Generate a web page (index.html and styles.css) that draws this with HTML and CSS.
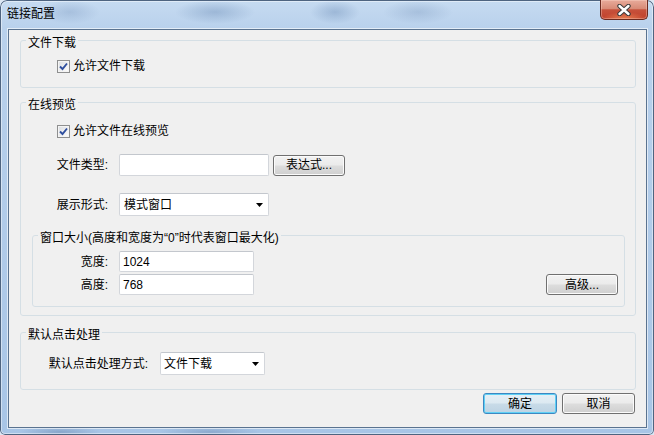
FILE: index.html
```html
<html>

<head>
    <link rel="stylesheet" href="styles.css">
</head>

<body>
    <div class="window">
        <div class="titlebar">
            <span class="title">链接配置</span>
            <button class="close">
                <svg width="14" height="12" viewBox="0 0 14 12">
                    <path d="M2.5 2 L11.5 10 M11.5 2 L2.5 10" stroke="#3b3b3b" stroke-width="4.4" stroke-linecap="round" fill="none" />
                    <path d="M2.5 2 L11.5 10 M11.5 2 L2.5 10" stroke="#ffffff" stroke-width="2.4" stroke-linecap="round" fill="none" />
                </svg>
            </button>
        </div>

        <div class="client">
            <!-- 文件下载 -->
            <fieldset class="group g-download">
                <legend>文件下载</legend>
                <div class="body">
                    <label class="check-row">
                        <span class="check"><svg width="11" height="11" viewBox="0 0 11 11"><path d="M2 5.5 L4.5 8 L9 2.5" stroke="#2f4f9e" stroke-width="1.9" fill="none" /></svg></span>
                        允许文件下载
                    </label>
                </div>
            </fieldset>

            <!-- 在线预览 -->
            <fieldset class="group g-preview">
                <legend>在线预览</legend>
                <div class="body">
                    <label class="check-row">
                        <span class="check"><svg width="11" height="11" viewBox="0 0 11 11"><path d="M2 5.5 L4.5 8 L9 2.5" stroke="#2f4f9e" stroke-width="1.9" fill="none" /></svg></span>
                        允许文件在线预览
                    </label>

                    <div class="row r-type">
                        <span class="lbl">文件类型:</span>
                        <span class="textbox wide"></span>
                        <button class="btn btn-expr">表达式...</button>
                    </div>

                    <div class="row r-mode">
                        <span class="lbl">展示形式:</span>
                        <span class="combo wide">模式窗口<svg class="arrow" width="7" height="4" viewBox="0 0 7 4"><polygon points="0,0 7,0 3.5,4" fill="#000" /></svg></span>
                    </div>

                    <fieldset class="group inner">
                        <legend>窗口大小(高度和宽度为“0”时代表窗口最大化)</legend>
                        <div class="body">
                            <div class="row">
                                <span class="lbl short">宽度:</span>
                                <span class="textbox small">1024</span>
                            </div>
                            <div class="row r-height">
                                <span class="lbl short">高度:</span>
                                <span class="textbox small">768</span>
                                <button class="btn btn-adv">高级...</button>
                            </div>
                        </div>
                    </fieldset>
                </div>
            </fieldset>

            <!-- 默认点击处理 -->
            <fieldset class="group g-click">
                <legend>默认点击处理</legend>
                <div class="body">
                    <div class="row">
                        <span class="lbl long">默认点击处理方式:</span>
                        <span class="combo narrow">文件下载<svg class="arrow" width="7" height="4" viewBox="0 0 7 4"><polygon points="0,0 7,0 3.5,4" fill="#000" /></svg></span>
                    </div>
                </div>
            </fieldset>

            <div class="actions">
                <button class="btn btn-ok">确定</button>
                <button class="btn btn-cancel">取消</button>
            </div>
        </div>
    </div>
</body>

</html>
```

FILE: styles.css
```css
* {
    box-sizing: border-box;
}

body {
    margin: 0;
    background: #dce7f3;
    font: 12px/16px "Liberation Sans", "Noto Sans CJK SC", sans-serif;
    color: #000;
}

button {
    font: inherit;
    padding: 0;
    color: #000;
}

/* window frame */
.window {
    width: 654px;
    height: 435px;
    border-radius: 7px 7px 5px 5px;
    overflow: hidden;
    display: flex;
    flex-direction: column;
    background:
        radial-gradient(ellipse 30px 12px at 70px 12px, rgba(120, 150, 190, .35), transparent),
        radial-gradient(ellipse 40px 12px at 215px 12px, rgba(90, 125, 170, .35), transparent),
        radial-gradient(ellipse 25px 12px at 335px 12px, rgba(90, 125, 170, .35), transparent),
        radial-gradient(ellipse 35px 12px at 418px 12px, rgba(110, 140, 180, .3), transparent),
        radial-gradient(ellipse 40px 6px at 60px 432px, rgba(90, 120, 160, .4), transparent),
        radial-gradient(ellipse 50px 6px at 210px 432px, rgba(90, 120, 160, .35), transparent),
        linear-gradient(180deg, #c6dbf1 0%, #b9d1ec 28px, #a8c5e6 100%);
    box-shadow: inset 0 0 0 1px #4e6480, inset 0 0 0 2px rgba(255, 255, 255, .45);
}

.titlebar {
    height: 29px;
    display: flex;
    align-items: flex-start;
}

.title {
    padding: 6px 0 0 7px;
}

.close {
    margin: 0 6px 0 auto;
    width: 48px;
    height: 20px;
    border: 1px solid #6a2a20;
    border-top: none;
    border-radius: 0 0 5px 5px;
    display: flex;
    align-items: center;
    justify-content: center;
    background:
        radial-gradient(ellipse 22px 7px at 50% 100%, rgba(240, 140, 90, .85), transparent),
        linear-gradient(180deg, #e8ab9b 0%, #d88b77 45%, #c6513b 52%, #c0402b 100%);
    box-shadow: inset 0 0 0 1px rgba(255, 220, 210, .35);
}

/* client area */
.client {
    margin: 0 7px 0 8px;
    height: 399px;
    border: 1px solid #5a7390;
    background: #f0f0f0;
    box-shadow: 0 0 0 1px rgba(255, 255, 255, .6);
    display: flex;
    flex-direction: column;
}

/* group boxes */
.group {
    margin: 0 10px 0 11px;
    padding: 0;
    border: 1px solid #d5dfe5;
    border-radius: 3px;
    min-width: 0;
}

.group legend {
    margin-left: 5px;
    padding: 5px 2px 0;
    line-height: 16px;
}

.g-download .body {
    padding: 7px 0 13px 0;
}

.g-preview {
    margin-top: 4px;
}

.g-preview > .body {
    padding: 10px 0 8px 0;
}

.g-click {
    margin-top: 6px;
}

.g-click .body {
    padding: 9px 0 14px 0;
}

.inner {
    margin: 9px 10px 0 11px;
}

.inner .body {
    padding: 5px 6px 11px 0;
}

/* checkbox */
.check-row {
    display: flex;
    align-items: center;
    height: 16px;
    margin-left: 36px;
}

.check {
    width: 13px;
    height: 13px;
    margin-right: 3px;
    border: 1px solid #8e8f8f;
    background: linear-gradient(135deg, #d9dde2 0%, #f4f4f4 70%, #ffffff 100%);
    box-shadow: inset 0 0 0 1px #f4f4f4;
    display: flex;
    align-items: center;
    justify-content: center;
}

/* form rows */
.row {
    display: flex;
    align-items: center;
}

.r-type {
    margin-top: 15px;
}

.r-mode {
    margin-top: 17px;
}

.r-height {
    margin-top: 2px;
}

.lbl {
    width: 87px;
    margin-right: 11px;
    text-align: right;
}

.lbl.short {
    width: 75px;
}

.lbl.long {
    width: 127px;
    margin-right: 12px;
}

.textbox,
.combo {
    display: flex;
    align-items: center;
    background: #fff;
    border: 1px solid #d3d6db;
    border-top-color: #c3c7cd;
    border-radius: 2px;
    padding-left: 3px;
}

.textbox.wide {
    width: 150px;
    height: 22px;
}

.textbox.small {
    width: 135px;
    height: 21px;
}

.combo {
    height: 23px;
    padding: 0 5px 0 4px;
}

.combo.wide {
    width: 150px;
}

.combo.narrow {
    width: 105px;
    padding-left: 3px;
}

.combo .arrow {
    margin-left: auto;
}

/* buttons */
.btn {
    height: 21px;
    width: 72px;
    border: 1px solid #707070;
    border-radius: 3px;
    background: linear-gradient(180deg, #f2f2f2 0%, #ebebeb 48%, #dddddd 52%, #cfcfcf 100%);
    box-shadow: inset 0 0 0 1px #fbfbfb;
}

.btn-expr {
    margin-left: 4px;
}

.btn-adv {
    margin-left: auto;
}

.actions {
    margin: 3px 11px 0 0;
    display: flex;
    justify-content: flex-end;
    gap: 5px;
}

.btn-ok {
    width: 74px;
    border-color: #3c88c2;
    background: linear-gradient(180deg, #e6f0f6 0%, #dce9f1 48%, #c8dbe8 52%, #bdd3e3 100%);
    box-shadow: inset 0 0 0 1px #5fd0f5;
}

.btn-cancel {
    width: 73px;
}
```
